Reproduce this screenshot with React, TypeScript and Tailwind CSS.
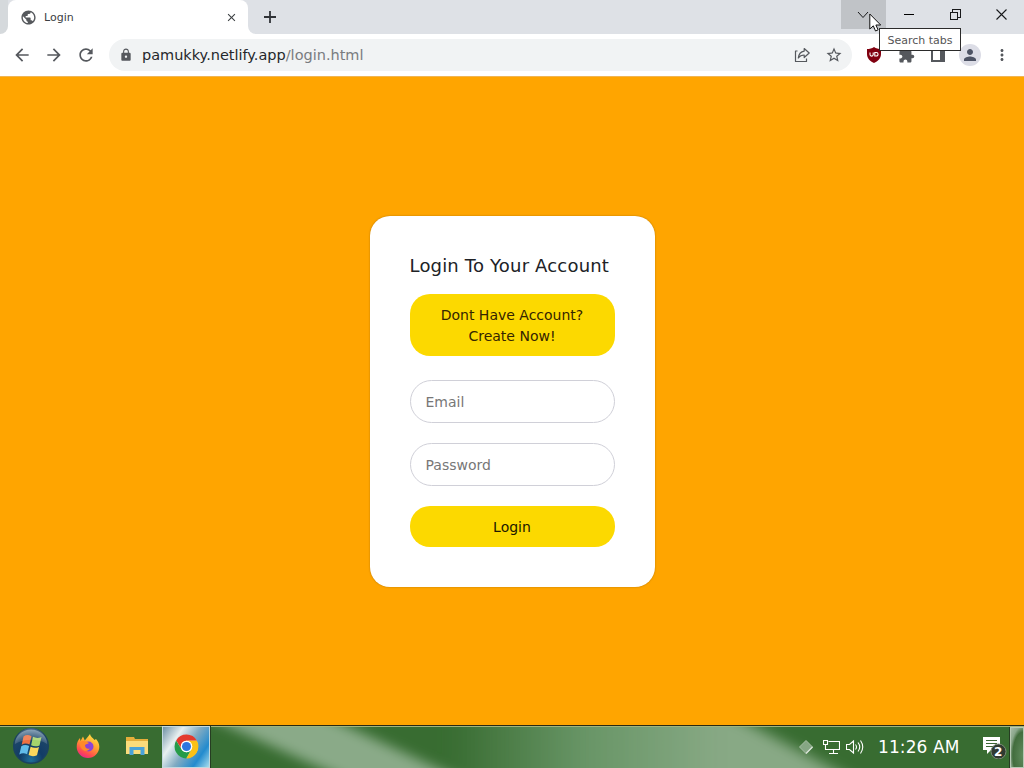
import React from 'react';
import {
  MdArrowBack,
  MdArrowForward,
  MdClose,
  MdExtension,
  MdLock,
  MdMoreVert,
  MdPerson,
  MdPublic,
  MdRefresh,
  MdStarBorder,
} from 'react-icons/md';

const TabStrip = () => (
  <div className="flex h-[34px] shrink-0 bg-[#dee1e6]">
    <div className="w-2 bg-white">
      <div className="h-full rounded-br-lg bg-[#d5d9dc]" />
    </div>
    <div className="flex w-[240px] items-center rounded-t-lg bg-white pl-3 pr-[10px]">
      <MdPublic className="h-[17px] w-[17px] text-[#55585c]" />
      <span className="ml-[7px] flex-1 pt-[2px] text-[11px] text-[#3c4043]">Login</span>
      <MdClose className="h-[13px] w-[13px] text-[#3c4043]" />
    </div>
    <div className="w-2 bg-white">
      <div className="h-full rounded-bl-lg bg-[#dee1e6]" />
    </div>
    <svg className="ml-2 mt-[11px] h-3 w-3" viewBox="0 0 12 12" stroke="#303338" strokeWidth="1.8">
      <path d="M6 0v12M0 6h12" />
    </svg>
    <div className="ml-auto flex h-[29px] text-[#18191b]">
      <div className="flex w-[45px] items-center justify-center bg-[#c0c3c7]">
        <svg className="h-3 w-3 -translate-x-px" viewBox="0 0 12 12" fill="none" stroke="currentColor">
          <path d="M1 3l5 5.5L11 3" />
        </svg>
      </div>
      <div className="flex w-[46px] items-center justify-center">
        <div className="h-px w-[10px] bg-black" />
      </div>
      <div className="flex w-[46px] items-center justify-center">
        <svg className="h-[11px] w-[11px]" viewBox="0 0 11 11" fill="none" stroke="currentColor" shapeRendering="crispEdges">
          <path d="M.5 3.5h7v7h-7zM2.5 3V.5h8v7.5H8" />
        </svg>
      </div>
      <div className="flex w-[46px] items-center justify-center">
        <svg className="h-[11px] w-[11px]" viewBox="0 0 11 11" stroke="currentColor" strokeWidth="1.1">
          <path d="M.5.5l10 10M10.5.5l-10 10" />
        </svg>
      </div>
    </div>
  </div>
);

const cell = 'flex h-8 w-8 items-center justify-center';

const Toolbar = () => (
  <div className="flex h-[43px] shrink-0 items-center border-b border-[#f0b553] bg-white pl-[6px] pr-[6px] text-[#55585d]">
    <div className={cell}><MdArrowBack className="h-[20px] w-[20px]" /></div>
    <div className={cell}><MdArrowForward className="h-[20px] w-[20px]" /></div>
    <div className={cell}><MdRefresh className="h-[20px] w-[20px]" /></div>
    <div className="ml-[7px] flex h-8 w-[743px] items-center rounded-full bg-[#f1f3f4] pl-[10px] pr-[2px]">
      <MdLock className="h-[14px] w-[14px]" />
      <span className="ml-[9px] flex-1 whitespace-nowrap pt-px text-[14.5px] tracking-[-0.01px] text-[#797c80]">
        <span className="text-[#25272b]">pamukky.netlify.app</span>/login.html
      </span>
      <div className={cell}>
        <svg className="h-4 w-4" viewBox="0 0 16 16" fill="none" stroke="currentColor" strokeWidth="1.2" strokeLinejoin="round">
          <path d="M3.5 4H1.5v10.5h11V11.5" />
          <path d="M10.2 1.5l5 4.5-5 4.5V8C7.5 8 5.7 9 4.3 11c.4-3.7 2.3-6.3 5.9-6.900z" />
        </svg>
      </div>
      <div className={cell}><MdStarBorder className="h-[18px] w-[18px]" /></div>
    </div>
    <div className="ml-[6px] flex">
      <div className={cell}>
        <svg className="h-4 w-4" viewBox="0 0 16 16">
          <path d="M8 0C6 1.5 3.5 2 1 2v5c0 4.500 3 7 7 9 4-2 7-4.500 7-9V2c-2.500 0-5-.5-7-2z" fill="#800010" />
          <path d="M4 5.5v2a1.6 1.6 0 003.200 0v-2M8.800 5.500h1.500a1.600 1.600 0 010 3.500H8.800z" fill="none" stroke="#fff" strokeWidth="1.1" />
        </svg>
      </div>
      <div className={cell}><MdExtension className="h-[17px] w-[17px]" /></div>
      <div className={cell}>
        <svg className="h-[14px] w-[14px]" viewBox="0 0 14 14">
          <path d="M1 1h12v12H1z" fill="none" stroke="currentColor" strokeWidth="2" />
          <path d="M9 1h4v12H9z" fill="currentColor" />
        </svg>
      </div>
      <div className={cell}>
        <div className="flex h-[22px] w-[22px] items-center justify-center rounded-full bg-[#dcdde6]">
          <MdPerson className="h-[18px] w-[18px] text-[#4d5364]" />
        </div>
      </div>
      <div className={cell}><MdMoreVert className="h-[18px] w-[18px]" /></div>
    </div>
  </div>
);

const LoginPage = () => (
  <main className="flex flex-1 items-center justify-center bg-[#ffa500]">
    <div className="flex h-[371px] w-[285px] flex-col rounded-[20px] bg-white px-10 pt-[38px] shadow-[0_0_2px_rgba(0,0,0,0.3)]">
      <h1 className="whitespace-nowrap text-[18px] leading-6 tracking-[0.18px] text-[#202226]">Login To Your Account</h1>
      <button className="mt-4 h-[62px] rounded-[20px] bg-[#fcd900] px-5 pt-[2px] text-[14px] leading-[21px] text-[#352500]">
        Dont Have Account? Create Now!
      </button>
      <input
        className="mt-6 h-[43px] w-full rounded-[22px] border border-[#d0d0d8] bg-white px-[15px] pt-px text-[14px] placeholder:text-[#777]"
        placeholder="Email"
      />
      <input
        className="mt-5 h-[43px] w-full rounded-[22px] border border-[#d0d0d8] bg-white px-[15px] pt-px text-[14px] placeholder:text-[#777]"
        placeholder="Password"
        type="password"
      />
      <button className="mt-5 h-[41px] rounded-[20px] bg-[#fcd900] pt-[2px] text-[14px] text-[#201800]">Login</button>
    </div>
  </main>
);

const WindowsOrb = () => (
  <svg className="h-[38px] w-[38px]" viewBox="0 0 38 38">
    <defs>
      <radialGradient id="orb" cx=".5" cy=".9" r=".85">
        <stop offset="0" stopColor="#1f6f98" />
        <stop offset=".4" stopColor="#123c66" />
        <stop offset=".75" stopColor="#1b4468" />
        <stop offset="1" stopColor="#6d8ba5" />
      </radialGradient>
    </defs>
    <circle cx="19" cy="19" r="17.3" fill="url(#orb)" stroke="#1b4260" strokeWidth="1.5" />
    <path d="M11.5 9.5c2.5-1.8 5-1.8 8-.3l-2 8.3c-2.7-1.3-5.2-1.3-7.8.2z" fill="#ef7040" />
    <path d="M21 9.800c3 1.500 5.500 1.500 8.500.2l-2 8.400c-3 1.200-5.500 1.200-8.400-.2z" fill="#a5d36b" />
    <path d="M9.300 19.200c2.500-1.500 5-1.500 7.800-.2l-2 8.300c-2.700-1.300-5.200-1.300-7.800.2z" fill="#62bce9" />
    <path d="M18.600 19.700c3 1.400 5.500 1.400 8.400.2l-2 8.400c-3 1.200-5.500 1.200-8.400-.2z" fill="#fbd75c" />
    <path d="M3 17a16 16 0 0132 0C26 11 11 12 3 17z" fill="#fff" opacity=".15" />
  </svg>
);

const FirefoxIcon = () => (
  <svg className="h-6 w-6" viewBox="0 0 24 24">
    <defs>
      <linearGradient id="fox" x1=".8" y1="0" x2=".3" y2="1">
        <stop offset="0" stopColor="#ffe94a" />
        <stop offset=".45" stopColor="#ffa02e" />
        <stop offset=".8" stopColor="#ff4a4f" />
        <stop offset="1" stopColor="#e8258b" />
      </linearGradient>
    </defs>
    <path
      d="M14 0c.3 2.500 3 4 4.500 6l1.500-1c2 2.200 3.400 5 3.300 8A11.300 11.300 0 0112 24 11.300 11.300 0 01.7 12.700C.7 9 2 6 4 4l.5 3L7 2.500l1.800 4C10 5 12 3 14 0z"
      fill="url(#fox)"
    />
    <circle cx="12.5" cy="12.5" r="5" fill="#8b43d6" />
    <path d="M4 8c3-2 6-1 9 1-1.500 1-3 1.300-4 2 0 3 2 4.500 5 3.500-2 3-6 3.500-8.500 0C4 12.500 3.500 10 4 8z" fill="#ff8a2a" />
  </svg>
);

const FolderIcon = () => (
  <svg className="h-5 w-[22px]" viewBox="0 0 22 20">
    <path d="M0 1h8l1 2h13v15H0z" fill="#e5ae3b" />
    <path d="M0 5h22v13H0z" fill="#fbdc7c" />
    <path d="M3.5 19V11h15v8h-4v-5h-7v5z" fill="#4aa3d9" />
  </svg>
);

const ChromeIcon = () => (
  <svg className="h-[25px] w-[25px]" viewBox="0 0 48 48">
    <circle cx="24" cy="24" r="22" fill="#fff" />
    <path d="M24 13h20A23 23 0 004.100 12.500l10.400 17A11 11 0 0124 13z" fill="#e33b2e" />
    <path d="M33.500 29.500L23.500 47A23 23 0 0044 13H24a11 11 0 019.500 16.500z" fill="#fbc116" />
    <path d="M14.500 29.500L4.100 12.500A23 23 0 0023.500 47l10-17.500a11 11 0 01-19 0z" fill="#269b48" />
    <circle cx="24" cy="24" r="11" fill="#fff" />
    <circle cx="24" cy="24" r="8.7" fill="#2f76df" />
  </svg>
);

const TaskbarGlass = () => (
  <svg className="absolute inset-0 h-full w-full" viewBox="0 0 1024 41" preserveAspectRatio="none">
    <defs>
      <filter id="soft" x="-20%" y="-60%" width="140%" height="220%">
        <feGaussianBlur stdDeviation="13 3" />
      </filter>
      <linearGradient id="haze" gradientUnits="userSpaceOnUse" x1="450" x2="720" y1="0" y2="0">
        <stop offset="0" stopColor="#719d70" stopOpacity="0" />
        <stop offset=".5" stopColor="#719d70" stopOpacity=".85" />
        <stop offset="1" stopColor="#88a985" />
      </linearGradient>
    </defs>
    <g filter="url(#soft)">
      <path d="M200-12h120l150 68H355z" fill="#8aaa88" />
      <path d="M440-12h290l130 68H440z" fill="url(#haze)" />
    </g>
  </svg>
);

const Taskbar = () => (
  <div className="relative flex h-[43px] shrink-0 items-center border-t border-[#292a12] bg-[#386c31]">
    <TaskbarGlass />
    <div className="relative flex w-full items-center shadow-[inset_0_1px_0_#a1b47c]">
      <div className="mb-[2px] ml-3"><WindowsOrb /></div>
      <div className="mb-[2px] ml-[26px]"><FirefoxIcon /></div>
      <div className="mb-[2px] ml-[26px]"><FolderIcon /></div>
      <div className="ml-[14px] flex h-[42px] w-[48px] items-center justify-center border border-[#c3d9df] bg-[linear-gradient(125deg,#6e91a4_0%,#e8f0f0_28%,#81abc2_52%,#238bce_78%,#a5dced_100%)] pb-[2px] shadow-[1px_0_0_#263d22]">
        <ChromeIcon />
      </div>
      <div className="ml-auto flex h-[42px] items-center text-white">
        <svg className="mb-px h-[14px] w-[14px]" viewBox="0 0 14 14">
          <path d="M7 .5L13.5 7 7 13.5.5 7z" fill="#86a684" stroke="#a9bfa7" />
          <path d="M13.5 7L7 13.5" stroke="#dce6db" strokeWidth="1.3" />
        </svg>
        <svg className="ml-[10px] h-[15px] w-[17px]" viewBox="0 0 17 15" fill="none" stroke="currentColor" strokeWidth="1.1">
          <path d="M5.5 1.5h11v8h-12M.5.5h4v4h-4zM2.5 4.5v5h3M10.5 9.5v4M6 13.5h9" />
        </svg>
        <svg className="mb-px ml-[6px] h-[16px] w-[18px]" viewBox="0 0 18 16" fill="none" stroke="currentColor" strokeWidth="1.1">
          <path d="M.5 5.500h3l4-3.500v12l-4-3.500h-3zM9.500 5.500q2 2.500 0 5M12 3.500q3.500 4.500 0 9M14.500 1.500q4.500 6.500 0 13" />
        </svg>
        <span className="ml-[14px] w-[83px] whitespace-nowrap pt-[2px] text-[17px] tracking-[0.1px]">11:26 AM</span>
        <div className="relative ml-[22px] h-[23px] w-[25px]">
          <svg className="h-[23px] w-[25px]" viewBox="0 0 25 23">
            <path d="M0 1h17v13H8l-4 4v-4H0z" fill="#fff" />
            <path d="M3 4.500h11M3 7.500h11M3 10.500h7" stroke="#3d6836" strokeWidth="1.2" />
            <circle cx="15.5" cy="15.5" r="7.5" fill="#303a31" stroke="#7d8d79" />
          </svg>
          <span className="absolute left-[11px] top-[9px] text-[12px] font-bold leading-[14px]">2</span>
        </div>
        <div className="ml-[2px] h-[41px] w-[14px] border border-[#b8c9b5] bg-[radial-gradient(ellipse_at_100%_70%,#5f8a5c_0%,#426d3d_60%,#8aa68a_75%,#a7baa6_100%)] shadow-[-1px_0_0_#263d22]" />
      </div>
    </div>
  </div>
);

const App = () => (
  <div className="relative flex h-[768px] w-[1024px] flex-col overflow-hidden font-['DejaVu_Sans',sans-serif]">
    <TabStrip />
    <Toolbar />
    <LoginPage />
    <Taskbar />
    <div className="absolute left-[879px] top-[28px] flex h-[23px] w-[82px] items-center justify-center whitespace-nowrap border border-[#2b2b2b] bg-white pt-[3px] text-[11px] text-[#555]">
      Search tabs
    </div>
    <svg className="absolute left-[869px] top-[13px] h-[20px] w-[13px]" viewBox="0 0 13 20">
      <path d="M.8 1v15l3.500-3.200 2.200 5.200 2.600-1.100L6.900 12h4.800z" fill="#fff" stroke="#111" />
    </svg>
  </div>
);

export default App;
